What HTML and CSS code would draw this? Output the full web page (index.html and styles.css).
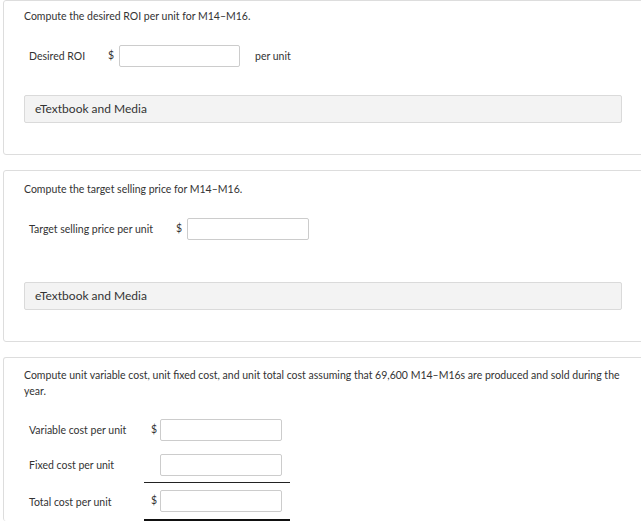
FILE: index.html
```html
<!DOCTYPE html>
<html>
<head>
<meta charset="utf-8">
<link rel="stylesheet" href="styles.css">
</head>
<body>
<div class="page">
  <section class="panel panel-first">
    <p class="question">Compute the desired ROI per unit for M14–M16.</p>
    <div class="answer-row">
      <span class="label label-roi">Desired ROI</span>
      <span class="dollar">$</span>
      <span class="input input-roi"></span>
      <span class="suffix">per unit</span>
    </div>
    <div class="media media-first">eTextbook and Media</div>
  </section>

  <section class="panel">
    <p class="question">Compute the target selling price for M14–M16.</p>
    <div class="answer-row">
      <span class="label label-target">Target selling price per unit</span>
      <span class="dollar">$</span>
      <span class="input"></span>
    </div>
    <div class="media media-second">eTextbook and Media</div>
  </section>

  <section class="panel panel-last">
    <p class="question">Compute unit variable cost, unit fixed cost, and unit total cost assuming that 69,600 M14–M16s are produced and sold during the year.</p>
    <div class="cost-table">
      <div class="cost-label">Variable cost per unit</div>
      <div class="cost-cell cell-first"><span class="dollar-sm">$</span><span class="input"></span></div>
      <div class="cost-label">Fixed cost per unit</div>
      <div class="cost-cell cell-sub"><span class="dollar-sm"></span><span class="input"></span></div>
      <div class="cost-label">Total cost per unit</div>
      <div class="cost-cell cell-total"><span class="dollar-sm">$</span><span class="input"></span></div>
    </div>
  </section>
</div>
</body>
</html>
```

FILE: styles.css
```css
html, body {
  margin: 0;
  padding: 0;
  background: #ffffff;
  overflow: hidden;
}

body {
  font-family: Lato, "Open Sans", "Liberation Sans", sans-serif;
  color: #333333;
  font-size: 10.5px;
}

.page {
  width: 660px;
}

.panel {
  width: 598px;
  margin: 0 0 15px 3px;
  padding: 10px 22px 31px 20px;
  border: 1px solid #dddddd;
  border-radius: 3px;
  background: #ffffff;
}

.panel-first {
  padding-top: 7px;
}

.panel-last {
  padding-top: 9px;
  padding-bottom: 0;
  border-bottom: none;
}

.question {
  margin: 0;
  font-size: 10.5px;
  line-height: 16px;
}

.answer-row {
  display: flex;
  align-items: center;
  margin-top: 21px;
  height: 22px;
}

.label {
  box-sizing: border-box;
  padding-left: 5px;
  flex: none;
}

.label-roi {
  width: 84px;
}

.label-target {
  width: 152px;
}

.dollar {
  width: 11px;
  flex: none;
  margin-top: -2px;
}

.input {
  display: block;
  box-sizing: border-box;
  width: 122px;
  height: 22px;
  border: 1px solid #cccccc;
  border-radius: 2px;
  background: #ffffff;
  flex: none;
}

.input-roi {
  width: 121px;
}

.suffix {
  margin-left: 15px;
}

.media {
  box-sizing: border-box;
  width: 598px;
  height: 28px;
  padding: 0 10px;
  border: 1px solid #dadada;
  border-radius: 2px;
  background: #f3f3f3;
  font-size: 12px;
  line-height: 26px;
  color: #333333;
}

.media-first {
  margin-top: 28px;
}

.media-second {
  margin-top: 42px;
}

.cost-table {
  display: grid;
  grid-template-columns: 120px 146px;
  margin-top: 13px;
}

.cost-label {
  display: flex;
  align-items: center;
  padding-left: 5px;
}

.cost-cell {
  display: flex;
  align-items: center;
  padding: 7px 8px 6px 7px;
}

.cell-first {
  padding-top: 7px;
  padding-bottom: 6px;
}

.cell-sub {
  border-bottom: 1px solid #222222;
}

.cell-total {
  padding-bottom: 7px;
  border-bottom: 2px solid #111111;
}

.dollar-sm {
  width: 9px;
  flex: none;
  margin-top: -2px;
}
```
